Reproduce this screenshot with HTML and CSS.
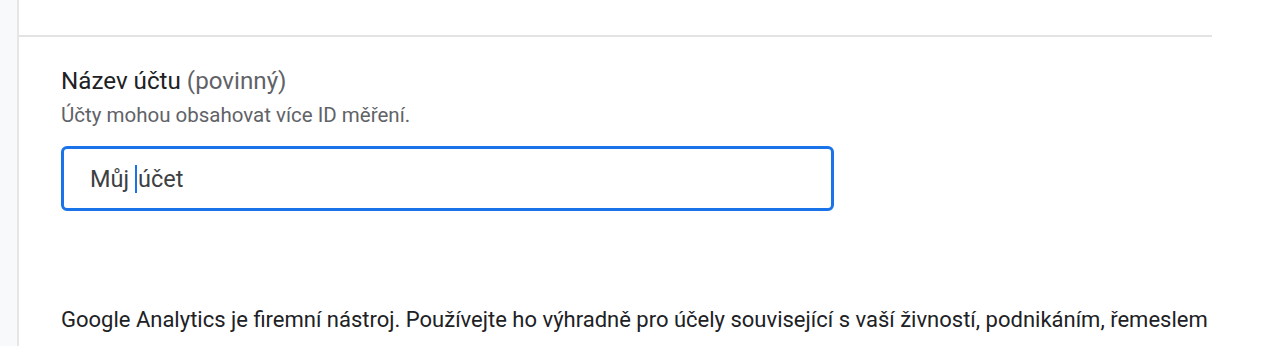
FILE: index.html
```html
<!DOCTYPE html>
<html lang="cs">
<head>
<meta charset="utf-8">
<link rel="stylesheet" href="styles.css">
</head>
<body>
<div class="page">
  <div class="rail"></div>
  <main class="main">
    <div class="topbar"></div>
    <section class="field">
      <div class="label">Název účtu <span class="req">(povinný)</span></div>
      <div class="hint">Účty mohou obsahovat více ID měření.</div>
      <div class="input"><span class="value">Můj </span><span class="caret"></span><span class="value">účet</span></div>
    </section>
    <p class="notice">Google Analytics je firemní nástroj. Používejte ho výhradně pro účely související s vaší živností, podnikáním, řemeslem nebo profesí.</p>
  </main>
</div>
</body>
</html>
```
FILE: styles.css
```css
html, body {
  margin: 0;
  padding: 0;
  background: #ffffff;
}
body {
  font-family: Roboto, "Liberation Sans", Arial, sans-serif;
  color: #202124;
}
.page {
  display: flex;
  height: 346px;
  overflow: hidden;
}
.rail {
  width: 17px;
  flex: none;
  background: #f8f9fa;
  border-right: 2px solid #e6e6e6;
}
.main {
  width: 1193px;
  flex: none;
  overflow: hidden;
}
.topbar {
  height: 35px;
  border-bottom: 2px solid #e3e3e3;
}
.field {
  padding-left: 42px;
  padding-top: 29px;
}
.label {
  font-size: 24.2px;
  line-height: 30px;
  color: #202124;
}
.req {
  color: #5f6368;
}
.hint {
  font-size: 20.5px;
  line-height: 26px;
  color: #5f6368;
  margin-top: 6px;
}
.input {
  box-sizing: border-box;
  margin-top: 18px;
  width: 773px;
  height: 65px;
  border: 3px solid #1a73e8;
  border-radius: 6px;
  display: flex;
  align-items: center;
  padding-left: 26px;
  font-size: 23.5px;
  color: #3c4043;
  white-space: pre;
}
.caret {
  display: inline-block;
  width: 2px;
  height: 28px;
  background: #1a73e8;
  margin-right: 1px;
}
.notice {
  margin: 88px 0 0 42px;
  font-size: 22px;
  line-height: 42px;
  color: #202124;
}
```
